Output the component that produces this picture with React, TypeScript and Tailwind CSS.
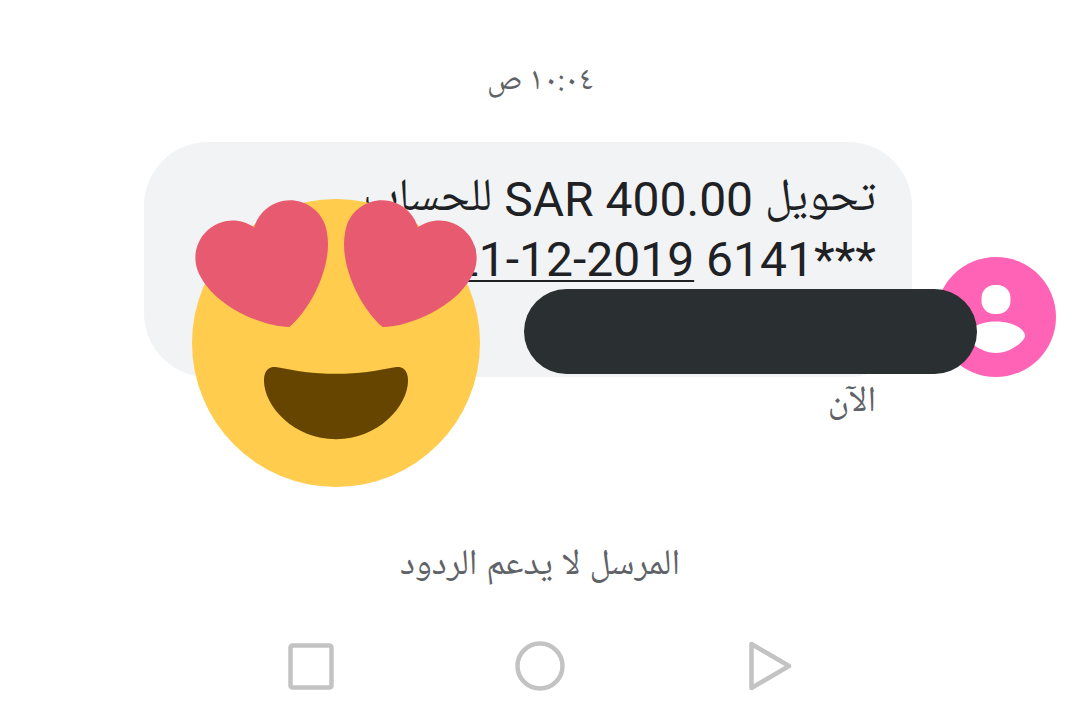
import React from 'react';

const HeartEyes: React.FC = () => (
  <svg viewBox="0 0 36 36" className="w-72 h-72" role="img" aria-label="heart eyes">
    <circle cx="18" cy="18" r="18" fill="#FFCC4D" />
    <path
      fill="#664500"
      d="M18 21.849c-2.966 0-4.935-.346-7.369-.819-.557-.106-1.638 0-1.638 1.638 0 3.275 3.763 7.369 9.007 7.369s9.007-4.094 9.007-7.369c0-1.638-1.082-1.745-1.638-1.638-2.434.473-4.402.819-7.369.819"
    />
    <path
      fill="#E75A70"
      d="M16.65 3.281C15.791.85 13.126-.426 10.694.431c-1.476.52-2.521 1.711-2.928 3.104-1.191-.829-2.751-1.1-4.225-.58C1.111 3.813-.167 6.48.692 8.911c.122.344.284.663.472.958 1.951 3.582 7.588 6.1 11.001 6.131 2.637-2.167 5.446-7.665 4.718-11.677-.038-.348-.113-.698-.233-1.042zm2.7 0C20.209.85 22.875-.426 25.306.431c1.476.52 2.521 1.711 2.929 3.104 1.191-.829 2.751-1.1 4.225-.58 2.43.858 3.707 3.525 2.85 5.956-.123.344-.284.663-.473.958-1.951 3.582-7.588 6.1-11.002 6.131-2.637-2.167-5.445-7.665-4.717-11.677.037-.348.112-.698.232-1.042z"
    />
  </svg>
);

const Avatar: React.FC = () => (
  <svg viewBox="0 0 120 120" className="w-[120px] h-[120px] shrink-0" aria-hidden="true">
    <circle cx="60" cy="60" r="60" fill="#ff63b6" />
    <rect x="45.500" y="28" width="29" height="29" rx="13" fill="#fff" />
    <path d="M60 64.500C77 64.500 89 72 89 79C89 83 76 96 60 96C44 96 31 83 31 79C31 72 43 64.500 60 64.500Z" fill="#fff" />
  </svg>
);

const navButtons = [
  { label: 'Back', shape: <path d="M8.500 4V48L46 26Z" /> },
  { label: 'Home', shape: <circle cx="26" cy="26" r="22.500" /> },
  { label: 'Recents', shape: <rect x="5.500" y="5.500" width="41" height="42" rx="2" /> },
];

const App: React.FC = () => {
  return (
    <main
      dir="rtl"
      lang="ar"
      className="min-h-screen flex flex-col bg-white pt-[58px] text-[#5f6368] font-['Roboto','Noto_Naskh_Arabic','Noto_Sans_Arabic','DejaVu_Sans',sans-serif]"
    >
      <time className="text-center text-[32px] leading-[48px] font-['Noto_Naskh_Arabic','DejaVu_Sans',sans-serif]">
        ١٠:٠٤ ص
      </time>

      <section className="mt-9 ps-6 pe-36">
        <div className="relative flex items-end gap-6">
          <Avatar />
          <div className="grow bg-[#f1f3f4] rounded-[64px] px-9 pt-7 pb-[87px] text-5xl leading-[60px] text-[#202124]">
            <p className="flex gap-3">
              <span className="text-[46px] leading-[60px] font-['Noto_Naskh_Arabic','DejaVu_Sans',sans-serif]">تحويل</span>
              <bdi>SAR 400.00</bdi>
              <span className="text-[46px] leading-[60px] font-['Noto_Naskh_Arabic','DejaVu_Sans',sans-serif]">للحساب</span>
            </p>
            <p>
              ***6141{' '}
              <a href="#date" dir="ltr" className="inline-block underline decoration-2 underline-offset-4">
                21-12-2019
              </a>
            </p>
          </div>

          {/* stickers laid over the message */}
          <div className="absolute right-[79px] bottom-[3px] w-[453px] h-[85px] rounded-full bg-[#2a2f32]" />
          <div className="absolute left-12 top-[57px]">
            <HeartEyes />
          </div>
        </div>
        <p className="ps-[180px] text-4xl leading-[44px]">الآن</p>
      </section>

      <p className="mt-[117px] text-center text-4xl leading-[48px]">المرسل لا يدعم الردود</p>

      <nav className="mt-auto mb-[34px] flex justify-center gap-[177px]">
        {navButtons.map((btn) => (
          <button key={btn.label} type="button" aria-label={btn.label}>
            <svg
              viewBox="0 0 52 52"
              className="w-[52px] h-[52px]"
              fill="none"
              stroke="#c3c3c3"
              strokeWidth="4.500"
              strokeLinejoin="round"
            >
              {btn.shape}
            </svg>
          </button>
        ))}
      </nav>
    </main>
  );
};

export default App;
